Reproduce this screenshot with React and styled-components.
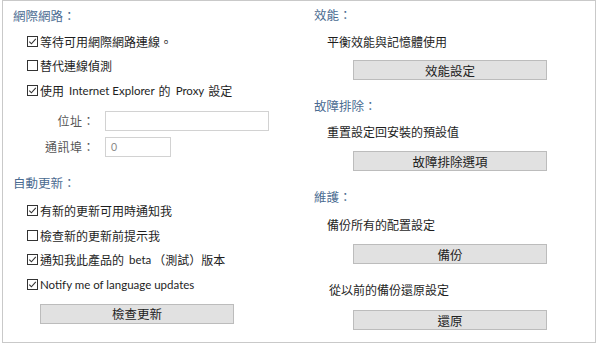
import React from "react";
import styled, { createGlobalStyle } from "styled-components";

const GlobalStyle = createGlobalStyle`
    html, body {
        margin: 0;
        padding: 0;
        background: #ffffff;
    }
    body {
        font-family: "Noto Sans CJK TC", "Noto Sans", sans-serif;
        font-size: 12px;
        color: #1e1e1e;
    }
`;

const Frame = styled.div`
    box-sizing: border-box;
    margin-left: 2px;
    width: 594px;
    height: 343px;
    border: 1px solid #c9c9c9;
    display: grid;
    grid-template-columns: 298px 1fr;
`;

const Column = styled.div`
    display: flex;
    flex-direction: column;
    padding-top: ${(p) => p.$top}px;
    padding-left: ${(p) => p.$left}px;
`;

const Heading = styled.div`
    line-height: 20px;
    height: 20px;
    color: #4a6b91;
    font-size: 12.5px;
    margin-top: ${(p) => p.$mt || 0}px;
`;

const CheckList = styled.div`
    display: flex;
    flex-direction: column;
    margin-top: ${(p) => p.$mt || 0}px;
    padding-left: 14px;
`;

const CheckRow = styled.label`
    display: flex;
    align-items: center;
    height: 24.5px;
    gap: 2px;
    white-space: nowrap;
    font-size: ${(p) => (p.$latin ? "11.5px" : "12px")};
    font-family: ${(p) =>
        p.$latin ? 'Lato, "Noto Sans", sans-serif' : "inherit"};
`;

const Latin = styled.span`
    font-family: Lato, "Noto Sans", sans-serif;
    font-size: 11.5px;
    margin: 0 ${(p) => (p.$tight ? 0 : 2)}px 0 3px;
`;

const BoxIcon = styled.svg`
    flex: none;
    width: 11px;
    height: 11px;
`;

const Fields = styled.div`
    display: flex;
    flex-direction: column;
    gap: 6px;
    margin-top: 8px;
    padding-left: 14px;
`;

const FieldRow = styled.div`
    display: flex;
    align-items: center;
    height: 20px;
`;

const FieldLabel = styled.span`
    width: 68px;
    text-align: right;
    color: #555;
    letter-spacing: 0.5px;
`;

const Input = styled.div`
    box-sizing: border-box;
    margin-left: 10px;
    width: ${(p) => p.$w}px;
    height: 20px;
    border: 1px solid #d2d2d2;
    padding-left: 5px;
    font-family: Lato, "Noto Sans", sans-serif;
    font-size: 10.5px;
    line-height: 18px;
    color: #8a8a8a;
`;

const Button = styled.div`
    box-sizing: border-box;
    width: 194px;
    height: 20px;
    margin-top: ${(p) => p.$mt || 0}px;
    margin-left: ${(p) => p.$ml}px;
    background: #e1e1e1;
    border: 1px solid #bcbcbc;
    display: flex;
    align-items: center;
    justify-content: center;
    font-size: 12.5px;
    color: #222;
`;

const Desc = styled.div`
    line-height: 20px;
    height: 20px;
    padding-left: ${(p) => p.$indent || 13}px;
    margin-top: ${(p) => p.$mt || 0}px;
`;

function Check({ checked }) {
    return (
        <BoxIcon viewBox="0 0 11 11">
            <rect x="0.5" y="0.5" width="10" height="10" fill="#fff" stroke="#333" />
            {checked && (
                <path d="M2.3 5.6 L4.4 7.8 L8.8 2.8" fill="none" stroke="#333" strokeWidth="1.1" />
            )}
        </BoxIcon>
    );
}

export default function App() {
    return (
        <>
            <GlobalStyle />
            <Frame>
                <Column $top={5} $left={10}>
                    <Heading>網際網路：</Heading>
                    <CheckList $mt={3}>
                        <CheckRow>
                            <Check checked />
                            等待可用網際網路連線。
                        </CheckRow>
                        <CheckRow>
                            <Check />
                            替代連線偵測
                        </CheckRow>
                        <CheckRow>
                            <Check checked />
                            使用<Latin>Internet Explorer</Latin>的<Latin>Proxy</Latin>設定
                        </CheckRow>
                    </CheckList>
                    <Fields>
                        <FieldRow>
                            <FieldLabel>位址：</FieldLabel>
                            <Input $w={164} />
                        </FieldRow>
                        <FieldRow>
                            <FieldLabel>通訊埠：</FieldLabel>
                            <Input $w={66}>0</Input>
                        </FieldRow>
                    </Fields>
                    <Heading $mt={16}>自動更新：</Heading>
                    <CheckList $mt={6}>
                        <CheckRow>
                            <Check checked />
                            有新的更新可用時通知我
                        </CheckRow>
                        <CheckRow>
                            <Check />
                            檢查新的更新前提示我
                        </CheckRow>
                        <CheckRow>
                            <Check checked />
                            通知我此產品的<Latin $tight>beta</Latin>（測試）版本
                        </CheckRow>
                        <CheckRow $latin>
                            <Check checked />
                            Notify me of language updates
                        </CheckRow>
                    </CheckList>
                    <Button $ml={27} $mt={7}>檢查更新</Button>
                </Column>
                <Column $top={4} $left={13}>
                    <Heading>效能：</Heading>
                    <Desc $mt={7}>平衡效能與記憶體使用</Desc>
                    <Button $ml={39} $mt={8}>效能設定</Button>
                    <Heading $mt={16}>故障排除：</Heading>
                    <Desc $mt={6}>重置設定回安裝的預設值</Desc>
                    <Button $ml={39} $mt={9}>故障排除選項</Button>
                    <Heading $mt={16}>維護：</Heading>
                    <Desc $mt={8}>備份所有的配置設定</Desc>
                    <Button $ml={39} $mt={9}>備份</Button>
                    <Desc $mt={16} $indent={15}>從以前的備份還原設定</Desc>
                    <Button $ml={39} $mt={10}>還原</Button>
                </Column>
            </Frame>
        </>
    );
}
